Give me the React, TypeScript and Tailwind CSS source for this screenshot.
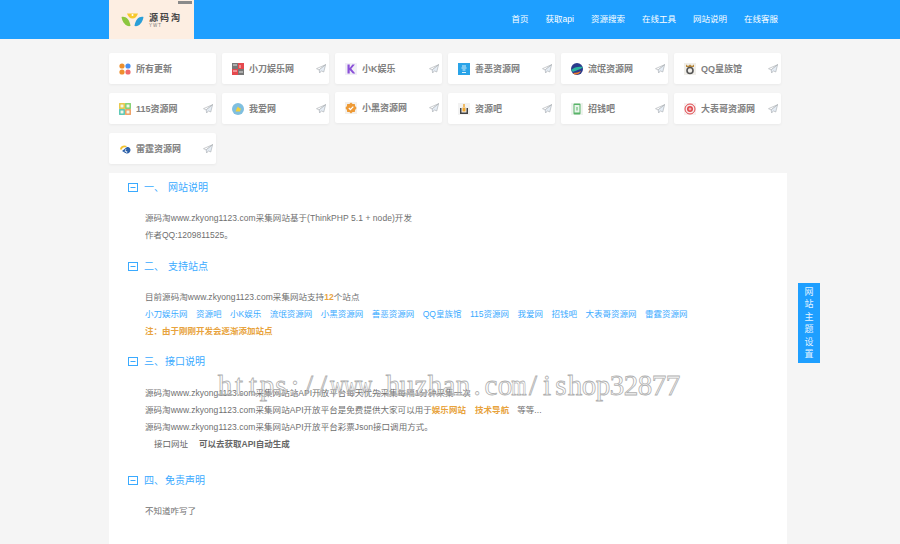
import type { ReactNode } from 'react';

const navItems = ['首页', '获取api', '资源搜索', '在线工具', '网站说明', '在线客服'];

const Plane = () => (
  <svg width="10" height="10" viewBox="0 0 12 12" fill="none" className="shrink-0">
    <path d="M11.5.8 .6 5.6l3.2 1.5L11.5.8Z" fill="#fff" stroke="#a3a8ae" strokeWidth=".7" strokeLinejoin="round" />
    <path d="M11.5.8 3.8 7.1l.6 3.7 2-2.600 2.900 1.400L11.5.8Z" fill="#e6edf5" stroke="#a3a8ae" strokeWidth=".7" strokeLinejoin="round" />
  </svg>
);

const icons: Record<string, ReactNode> = {
  all: (
    <svg width="12" height="12" viewBox="0 0 12 12">
      <circle cx="3" cy="3" r="2.600" fill="#ee8f2d" />
      <circle cx="9" cy="3" r="2.600" fill="#4a90f0" />
      <circle cx="3" cy="9" r="2.600" fill="#ee8f2d" />
      <circle cx="9" cy="9" r="2.600" fill="#f0696a" />
    </svg>
  ),
  dao: (
    <svg width="12" height="12" viewBox="0 0 12 12">
      <rect width="6" height="6" fill="#777" />
      <rect x="6" width="6" height="6" fill="#e5484d" />
      <rect y="6" width="6" height="6" fill="#e5484d" />
      <rect x="6" y="6" width="6" height="6" fill="#777" />
      <path d="M1 2h4M8 2v3M1 8h4M7 9h4" stroke="#fff" strokeWidth=".8" />
    </svg>
  ),
  k: (
    <svg width="12" height="12" viewBox="0 0 12 12">
      <rect width="12" height="12" fill="#f0eef6" />
      <path d="M2.500 1.500v9h2.200V7l3.200 3.500h2.400L6.300 5.800l3.600-4.300H7.400L4.700 5V1.500Z" fill="#8a4fd8" />
    </svg>
  ),
  shan: (
    <svg width="12" height="12" viewBox="0 0 12 12">
      <rect width="12" height="12" fill="#29a3e8" />
      <path d="M4 3h4M3.500 5h5M4.500 7h3M4 9.500h4" stroke="#d8f0fb" strokeWidth="1" />
    </svg>
  ),
  liu: (
    <svg width="12" height="12" viewBox="0 0 12 12">
      <circle cx="6" cy="6" r="6" fill="#2b3a8c" />
      <path d="M0 7c3-3 8-4 12-3-1 2-6 3-10 5Z" fill="#2bb5a0" />
      <path d="M2 10c3 0 6-1 8-2-1 3-6 5-8 2Z" fill="#ef7d2e" />
    </svg>
  ),
  qq: (
    <svg width="12" height="12" viewBox="0 0 12 12">
      <rect width="12" height="12" fill="#f0eee9" />
      <path d="M2 1.500 4 3l2-1.500L8 3l2-1.500V4H2Z" fill="#b98a3e" />
      <circle cx="6" cy="7.500" r="3" fill="none" stroke="#555" strokeWidth="1.600" />
    </svg>
  ),
  n115: (
    <svg width="12" height="12" viewBox="0 0 12 12">
      <rect width="12" height="12" fill="#f2f6e8" />
      <rect x=".8" y=".8" width="4.400" height="4.400" fill="none" stroke="#e8c33d" strokeWidth="1.400" />
      <rect x="6.800" y=".8" width="4.400" height="4.400" fill="none" stroke="#7ccf6a" strokeWidth="1.400" />
      <rect x=".8" y="6.800" width="4.400" height="4.400" fill="none" stroke="#4fc4b2" strokeWidth="1.400" />
      <rect x="6.800" y="6.800" width="4.400" height="4.400" fill="none" stroke="#ef9a5a" strokeWidth="1.400" />
    </svg>
  ),
  wo: (
    <svg width="12" height="12" viewBox="0 0 12 12">
      <circle cx="6" cy="6" r="6" fill="#7fbfe0" />
      <path d="M3.500 8.500 5 5l1-1.500L7 5l2 .5L8 8.500Z" fill="#f2d23c" />
    </svg>
  ),
  hei: (
    <svg width="12" height="12" viewBox="0 0 12 12">
      <rect width="12" height="12" fill="#f3f0ec" />
      <path d="M6 .6 7.600 2l2.200-.1.3 2.100L11.600 6l-1.500 2-.3 2.100L7.600 10 6 11.400 4.400 10l-2.200.1L1.900 8 .4 6l1.500-2 .3-2.100L4.400 2Z" fill="#ee9a35" />
      <path d="m3.800 6 1.600 1.600 2.900-3" fill="none" stroke="#fff" strokeWidth="1.300" />
    </svg>
  ),
  ziyuan: (
    <svg width="12" height="12" viewBox="0 0 12 12">
      <rect width="12" height="12" fill="#f2f2f2" />
      <path d="M2 5h1.500v4.500h5V5H10v6H2Z" fill="#444" />
      <rect x="4.500" y="4.500" width="3" height="4" fill="#f0a52c" />
      <rect x="5.300" y="1" width="1.400" height="3" fill="#f0a52c" />
    </svg>
  ),
  qian: (
    <svg width="12" height="12" viewBox="0 0 12 12">
      <rect width="12" height="12" fill="#eef3ee" />
      <rect x="2.500" y=".5" width="7" height="11" rx="1" fill="#58b368" />
      <rect x="3.500" y="2" width="5" height="7.500" fill="#e8f5ea" />
      <path d="M6 4v3.500" stroke="#58b368" strokeWidth="1" />
    </svg>
  ),
  biao: (
    <svg width="12" height="12" viewBox="0 0 12 12">
      <rect width="12" height="12" fill="#f7eeee" />
      <circle cx="6" cy="6" r="5" fill="none" stroke="#e0474c" strokeWidth="1" />
      <circle cx="6" cy="6" r="3" fill="#e0474c" />
      <path d="M4.500 6h3M6 4.500v3" stroke="#fff" strokeWidth=".7" />
    </svg>
  ),
  lei: (
    <svg width="12" height="12" viewBox="0 0 12 12">
      <path d="M1 6.500C1 3 5 1.500 8 3L6.500 4.500C5 4 3 5 3 6.500Z" fill="#f2c230" />
      <path d="M3 8c2-1 3-3 5-4 2-.5 3.500 1 3.500 3s-2 4-4 3.500C6 10 5 9 3 8Z" fill="#2a5fa8" />
      <path d="M7 6 6 8.500h2L7.500 10" stroke="#fff" strokeWidth=".7" fill="none" />
    </svg>
  ),
};

const sites = [
  { name: '所有更新', icon: 'all', plain: true },
  { name: '小刀娱乐网', icon: 'dao' },
  { name: '小K娱乐', icon: 'k' },
  { name: '善恶资源网', icon: 'shan' },
  { name: '流氓资源网', icon: 'liu' },
  { name: 'QQ皇族馆', icon: 'qq' },
  { name: '115资源网', icon: 'n115' },
  { name: '我爱网', icon: 'wo' },
  { name: '小黑资源网', icon: 'hei', raised: true },
  { name: '资源吧', icon: 'ziyuan' },
  { name: '招钱吧', icon: 'qian' },
  { name: '大表哥资源网', icon: 'biao' },
  { name: '雷霆资源网', icon: 'lei' },
];

const links = ['小刀娱乐网', '资源吧', '小K娱乐', '流氓资源网', '小黑资源网', '善恶资源网', 'QQ皇族馆', '115资源网', '我爱网', '招钱吧', '大表哥资源网', '雷霆资源网'];

function Heading({ num, title, gap, className }: { num: string; title: string; gap: string; className: string }) {
  return (
    <div className={`flex items-center h-[17px] pl-[19px] text-[10px] text-[#3aaaff] ${className}`}>
      <svg width="10" height="9" viewBox="0 0 10 9" fill="none" className="mr-[6px] shrink-0">
        <rect x=".5" y=".5" width="9" height="8" stroke="#3aaaff" />
        <path d="M2.500 4.500h5" stroke="#3aaaff" />
      </svg>
      <span className={gap}>{num}</span>
      <span>{title}</span>
    </div>
  );
}

export default function App() {
  return (
    <div
      className="relative h-[544px] w-[900px] overflow-hidden bg-[#f5f5f5] text-[8.500px] leading-[17px] text-[#6f6f6f]"
      style={{ fontFamily: '"Liberation Sans", "Noto Sans CJK SC", sans-serif' }}
    >
      <header className="h-[39px] bg-[#1e9fff] pl-[109px] pr-[122px] flex justify-between">
        <div className="relative w-[85px] h-[39px] bg-[#fdeee2] flex items-center gap-[5px] pl-[12px] pt-[1px]">
          <div className="absolute right-[2px] top-[1px] h-[3px] w-[14px] bg-[#8a8a8a]" />
          <svg width="23" height="14" viewBox="0 0 23 14">
            <path d="M6 0.500h11c-1 3-3 5-5.500 5S7 3.500 6 0.500Z" fill="#f7c92d" />
            <circle cx="11.500" cy="2" r="1" fill="#fff" />
            <path d="M0.500 4c4-1 8 2 9 9-4 1-8-3-9-9Z" fill="#8cc63f" />
            <path d="M22.500 4c-4-1-8 2-9 9 4 1 8-3 9-9Z" fill="#2a9fd8" />
          </svg>
          <div className="flex flex-col pt-[3px]">
            <span className="text-[9px] font-bold leading-[9px] tracking-[2px] text-[#444]">源码淘</span>
            <span className="text-[4.500px] leading-[6px] tracking-[1px] text-[#777]">YWT</span>
          </div>
        </div>
        <nav className="flex items-center gap-[17px] text-[8.500px] text-white">
          {navItems.map((n) => (
            <span key={n}>{n}</span>
          ))}
        </nav>
      </header>

      <div className="ml-[109px] mt-[14px] grid w-[672px] grid-cols-6 gap-x-[6px] gap-y-[9px]">
        {sites.map((s) => (
          <div
            key={s.name}
            className={`flex h-[31px] items-center rounded-[2px] bg-white pl-[10px] pr-[3px] shadow-[0_1px_3px_rgba(0,0,0,0.05)] ${s.raised ? '-translate-y-[1px]' : ''}`}
          >
            <span className="mr-[5px] flex w-[12px] shrink-0">{icons[s.icon]}</span>
            <span className="flex-1 truncate pt-[1px] text-[9px] font-bold text-[#808080]">{s.name}</span>
            {!s.plain && <Plane />}
          </div>
        ))}
      </div>

      <main className="ml-[109px] mt-[9px] h-[371px] w-[678px] bg-white pt-[6px]">
        <Heading num="一、" title="网站说明" gap="mr-[4px]" className="" />
        <div className="mt-[14px] pl-[36px]">
          <p className="tracking-[0.06px]">源码淘www.zkyong1123.com采集网站基于(ThinkPHP 5.1 + node)开发</p>
          <p>作者QQ:1209811525。</p>
        </div>

        <Heading num="二、" title="支持站点" gap="mr-[4px]" className="mt-[14px]" />
        <div className="mt-[14px] pl-[36px]">
          <p className="tracking-[0.06px]">
            目前源码淘www.zkyong1123.com采集网站支持<span className="font-bold text-[#e8a33d]">12</span>个站点
          </p>
          <p className="flex gap-[8.500px] text-[#3aaaff]">
            {links.map((l) => (
              <span key={l}>{l}</span>
            ))}
          </p>
          <p className="font-bold text-[#e8a33d]">注：由于刚刚开发会逐渐添加站点</p>
        </div>

        <Heading num="三、" title="接口说明" gap="mr-[1px]" className="mt-[13px]" />
        <div className="mt-[15px] pl-[36px]">
          <p className="tracking-[0.05px]">源码淘www.zkyong1123.com采集网站站API开放平台每天优先采集每隔1分钟采集一次</p>
          <p className="tracking-[0.05px]">
            源码淘www.zkyong1123.com采集网站API开放平台是免费提供大家可以用于
            <span className="font-bold text-[#e8a33d]">娱乐网站</span>
            <span className="ml-[9px] font-bold text-[#e8a33d]">技术导航</span>
            <span className="ml-[8px]">等等...</span>
          </p>
          <p className="tracking-[0.05px]">源码淘www.zkyong1123.com采集网站API开放平台彩票Json接口调用方式。</p>
          <p className="pl-[9px] text-[#666]">
            接口网址<span className="ml-[11px] font-bold">可以去获取API自动生成</span>
          </p>
        </div>

        <Heading num="四、" title="免责声明" gap="mr-[1px]" className="mt-[19px]" />
        <div className="mt-[14px] pl-[36px]">
          <p>不知道咋写了</p>
        </div>
      </main>

      <div className="absolute left-[798px] top-[283px] flex h-[80px] w-[22px] flex-col items-center justify-center bg-[#1e9fff] text-[9px] leading-[12.500px] text-[#e4f3ff]">
        {'网站主题设置'.split('').map((c, i) => (
          <span key={i}>{c}</span>
        ))}
      </div>

      <div
        className="absolute left-[218px] top-[368px] flex whitespace-nowrap text-[29px] leading-[34px] text-transparent [-webkit-text-stroke:0.8px_#b0b0b0]"
        style={{ fontFamily: '"Liberation Serif", serif' }}
      >
        {'https://www.huzhan.com/ishop32877'.split('').map((c, i) => (
          <span key={i} className={`flex w-[14px] justify-center ${c === 'w' || c === 'm' ? 'scale-x-[0.68]' : ''}`}>
            {c}
          </span>
        ))}
      </div>
    </div>
  );
}
